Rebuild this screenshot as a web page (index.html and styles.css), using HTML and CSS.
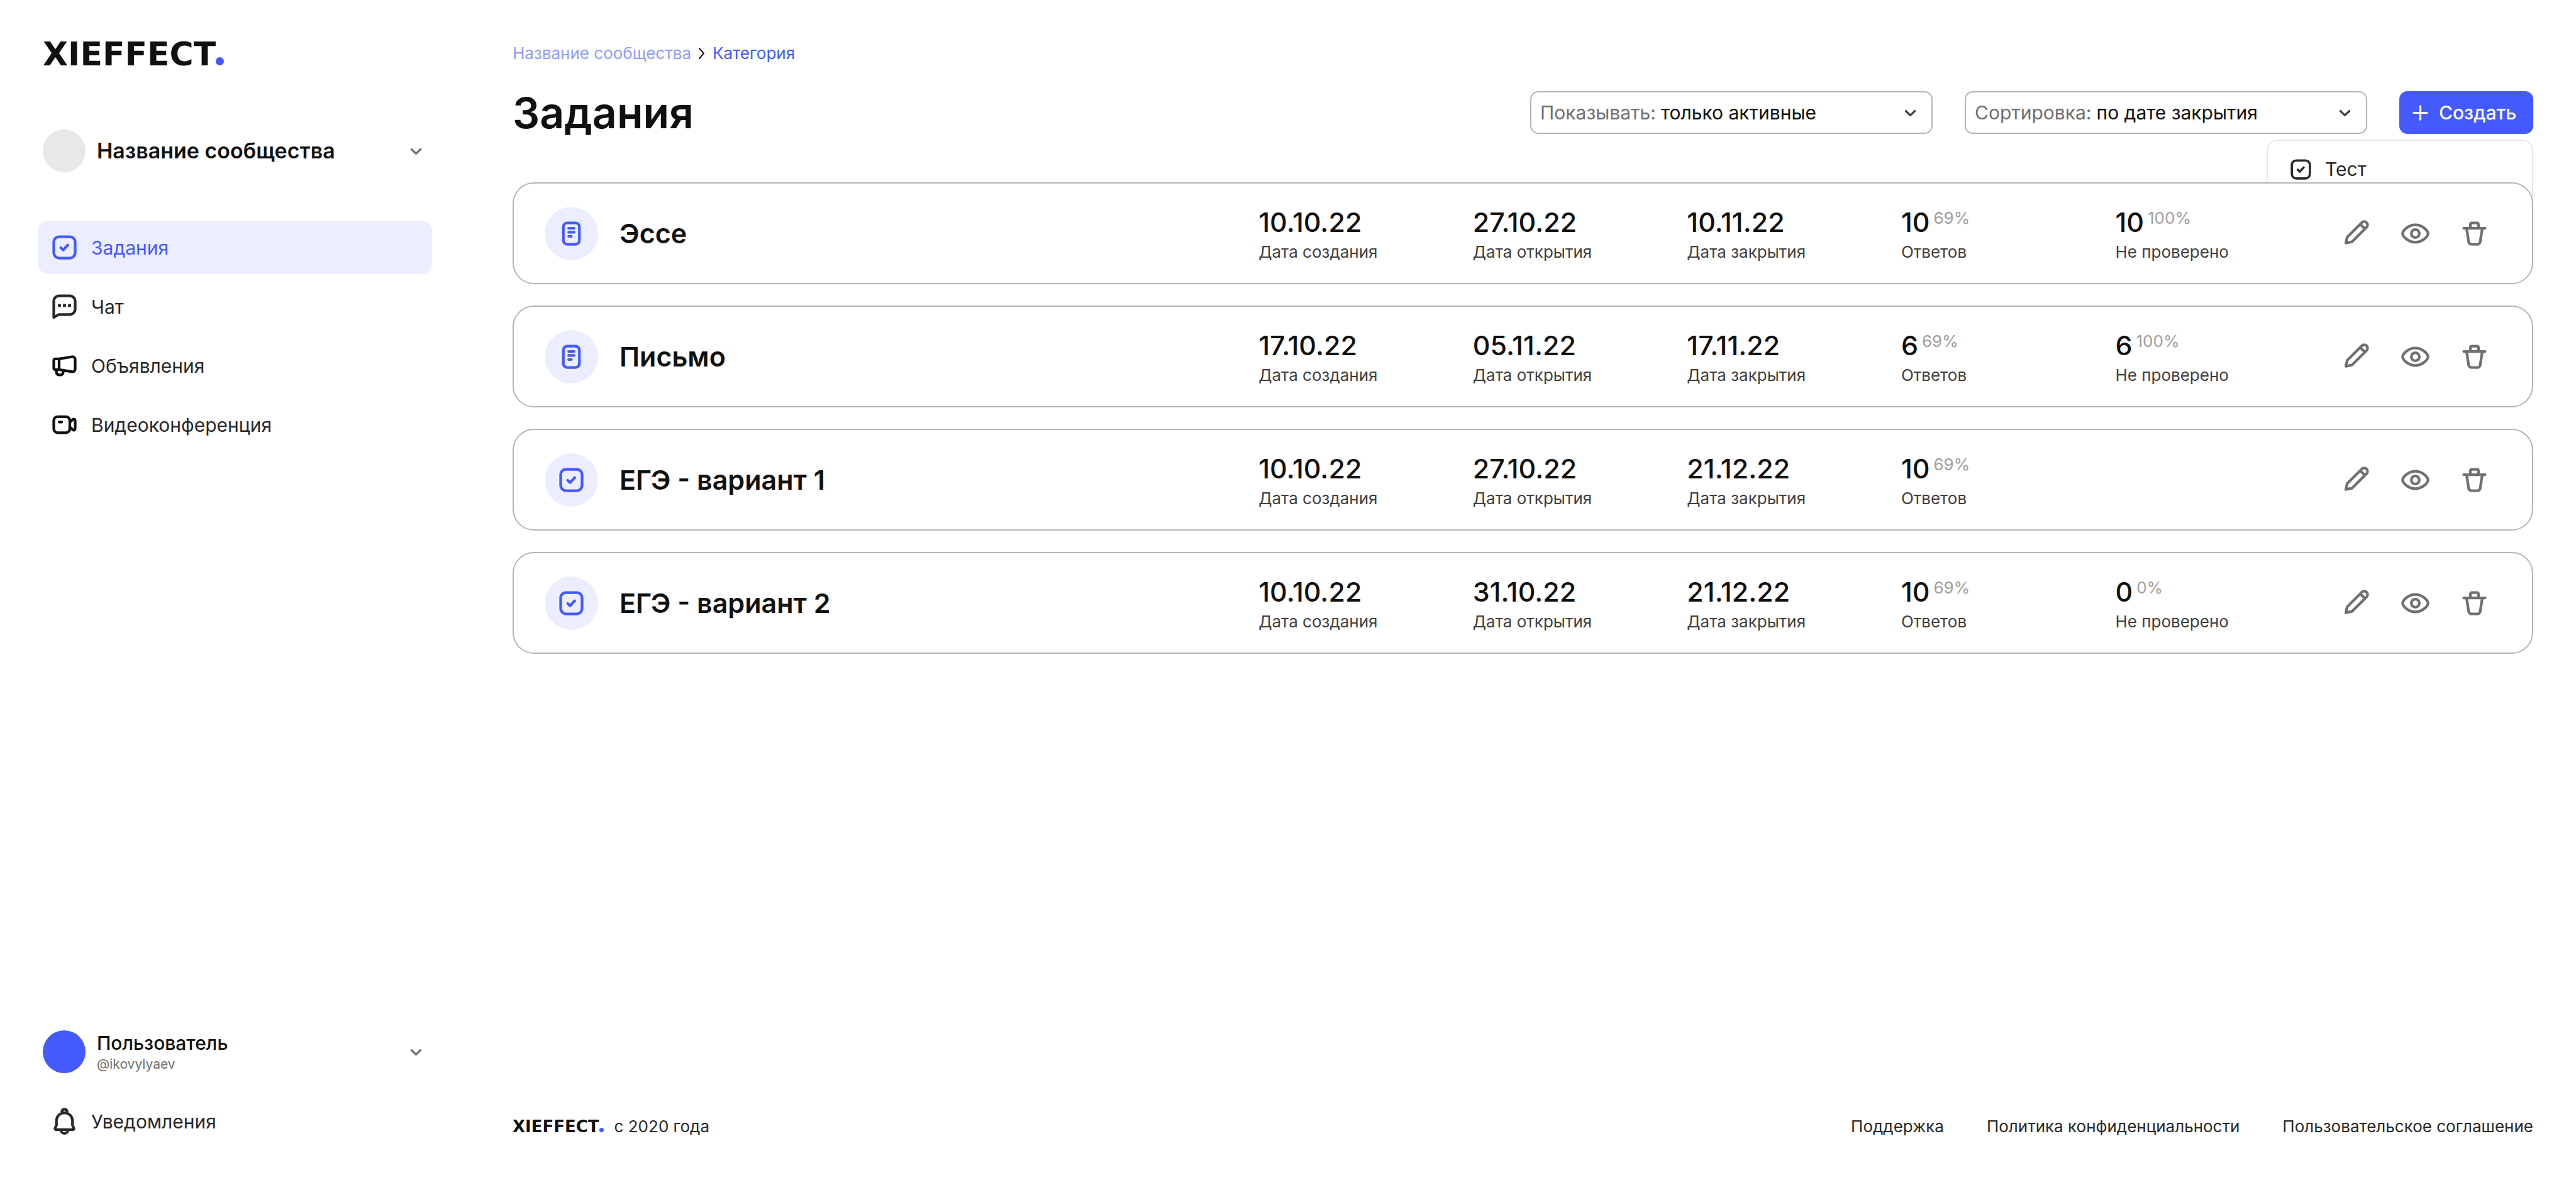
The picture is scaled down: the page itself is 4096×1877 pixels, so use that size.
FILE: index.html
```html
<!DOCTYPE html>
<html lang="ru">
<head>
<meta charset="utf-8">
<title>Задания</title>
<link rel="stylesheet" href="styles.css">
</head>
<body>
<svg class="sprite" aria-hidden="true">
  <symbol id="i-task" viewBox="0 0 24 24"><rect x="4" y="4" width="16" height="16" rx="4"/><path d="M9.25 12.25L11 14l3.5-3.75"/></symbol>
  <symbol id="i-chat" viewBox="0 0 24 24"><path d="M4 20.2V8a4 4 0 0 1 4-4h8a4 4 0 0 1 4 4v6a4 4 0 0 1-4 4H7.8z"/><g fill="currentColor" stroke="none"><circle cx="8.25" cy="11.25" r="1.25"/><circle cx="12" cy="11.25" r="1.25"/><circle cx="15.75" cy="11.25" r="1.25"/></g></symbol>
  <symbol id="i-announce" viewBox="0 0 24 24"><path d="M8 7H5a1 1 0 0 0-1 1v6a1 1 0 0 0 1 1h3M8 7l9.7-1.6a2 2 0 0 1 2.3 2v7.2a2 2 0 0 1-2.3 2L8 15zM6 15v2a2 2 0 0 0 2 2h1a2 2 0 0 0 2-2v-1.3"/></symbol>
  <symbol id="i-video" viewBox="0 0 24 24"><rect x="4" y="6" width="12" height="12" rx="3"/><path d="M8 10h2M16 10.2l2.4-2.1a1 1 0 0 1 1.6.8v6.2a1 1 0 0 1-1.6.8L16 13.8"/></symbol>
  <symbol id="i-bell" viewBox="0 0 24 24"><path d="M6 11.7a6 6 0 0 1 12 0V15l1 2.2a.8.8 0 0 1-.8 1.1H5.8a.8.8 0 0 1-.8-1.1L6 15zM10 6V5a2 2 0 0 1 4 0v1M9.2 18.3a2.8 2.8 0 0 0 5.6 0"/></symbol>
  <symbol id="i-file" viewBox="0 0 24 24"><rect x="6" y="4" width="12" height="16" rx="3"/><path d="M10 8h4M10 11h4M10 14h2"/></symbol>
  <symbol id="i-pencil" viewBox="0 0 24 24"><path d="M4.25 19.1l1-4.4L16.23 3.73a2.5 2.5 0 0 1 3.54 3.54L8.8 18.2zM15 5l3.5 3.5"/></symbol>
  <symbol id="i-eye" viewBox="0 0 24 24"><path d="M2.5 12c0-2 4-6.5 9.5-6.5s9.5 4.5 9.5 6.5-4 6.5-9.5 6.5S2.5 14 2.5 12z"/><circle cx="12" cy="12" r="3"/></symbol>
  <symbol id="i-trash" viewBox="0 0 24 24"><path d="M4 8h16M9 8V5a1 1 0 0 1 1-1h4a1 1 0 0 1 1 1v3M6.2 8.5l1.5 9.8A2 2 0 0 0 9.7 20h4.6a2 2 0 0 0 2-1.7l1.5-9.8"/></symbol>
  <symbol id="i-down" viewBox="0 0 24 24"><path stroke-width="1.5" d="M8.6 10.6L12 13.8l3.4-3.2"/></symbol>
  <symbol id="i-plus" viewBox="0 0 24 24"><path stroke-width="1.5" d="M12 7v10M7 12h10"/></symbol>
</svg>

<div class="layout">
  <aside class="sidebar">
    <a class="logo" href="#">XIEFFECT<span class="logo-dot"></span></a>

    <button class="switcher community" type="button">
      <span class="avatar"></span>
      <span class="switcher-title">Название сообщества</span>
      <svg class="icon"><use href="#i-down"/></svg>
    </button>

    <nav class="nav">
      <a class="nav-item active" href="#"><svg class="icon"><use href="#i-task"/></svg>Задания</a>
      <a class="nav-item" href="#"><svg class="icon"><use href="#i-chat"/></svg>Чат</a>
      <a class="nav-item" href="#"><svg class="icon dark"><use href="#i-announce"/></svg>Объявления</a>
      <a class="nav-item" href="#"><svg class="icon dark"><use href="#i-video"/></svg>Видеоконференция</a>
    </nav>

    <div class="sidebar-bottom">
      <button class="switcher" type="button">
        <span class="avatar user"></span>
        <span class="user-text"><span class="user-name">Пользователь</span><span class="user-handle">@ikovylyaev</span></span>
        <svg class="icon"><use href="#i-down"/></svg>
      </button>
      <a class="nav-item" href="#"><svg class="icon"><use href="#i-bell"/></svg>Уведомления</a>
    </div>
  </aside>

  <main class="main">
    <nav class="crumbs">
      <a class="crumb-parent" href="#">Название сообщества</a>
      <svg class="crumb-sep" viewBox="0 0 10 18"><path d="M1 1l7 8-7 8"/></svg>
      <a href="#">Категория</a>
    </nav>

    <header class="toolbar">
      <h1>Задания</h1>
      <div class="controls">
        <div class="select">
          <label for="show">Показывать:</label>
          <select id="show"><option>только активные</option></select>
          <svg class="icon"><use href="#i-down"/></svg>
        </div>
        <div class="select">
          <label for="sort">Сортировка:</label>
          <select id="sort"><option>по дате закрытия</option></select>
          <svg class="icon"><use href="#i-down"/></svg>
        </div>
        <div class="create">
          <button class="create-button" type="button"><svg class="icon"><use href="#i-plus"/></svg>Создать</button>
          <div class="menu">
            <a class="menu-item" href="#"><svg class="icon"><use href="#i-task"/></svg>Тест</a>
          </div>
        </div>
      </div>
    </header>

    <ul class="cards">
      <li class="card">
        <div class="name"><span class="badge"><svg class="icon"><use href="#i-file"/></svg></span><h2>Эссе</h2></div>
        <div class="stat"><span class="value">10.10.22</span><span class="caption">Дата создания</span></div>
        <div class="stat"><span class="value">27.10.22</span><span class="caption">Дата открытия</span></div>
        <div class="stat"><span class="value">10.11.22</span><span class="caption">Дата закрытия</span></div>
        <div class="stat"><span class="value">10<span class="percent">69%</span></span><span class="caption">Ответов</span></div>
        <div class="stat"><span class="value">10<span class="percent">100%</span></span><span class="caption">Не проверено</span></div>
        <div class="actions">
          <button type="button" aria-label="Редактировать"><svg class="icon"><use href="#i-pencil"/></svg></button>
          <button type="button" aria-label="Просмотр"><svg class="icon"><use href="#i-eye"/></svg></button>
          <button type="button" aria-label="Удалить"><svg class="icon"><use href="#i-trash"/></svg></button>
        </div>
      </li>
      <li class="card">
        <div class="name"><span class="badge"><svg class="icon"><use href="#i-file"/></svg></span><h2>Письмо</h2></div>
        <div class="stat"><span class="value">17.10.22</span><span class="caption">Дата создания</span></div>
        <div class="stat"><span class="value">05.11.22</span><span class="caption">Дата открытия</span></div>
        <div class="stat"><span class="value">17.11.22</span><span class="caption">Дата закрытия</span></div>
        <div class="stat"><span class="value">6<span class="percent">69%</span></span><span class="caption">Ответов</span></div>
        <div class="stat"><span class="value">6<span class="percent">100%</span></span><span class="caption">Не проверено</span></div>
        <div class="actions">
          <button type="button" aria-label="Редактировать"><svg class="icon"><use href="#i-pencil"/></svg></button>
          <button type="button" aria-label="Просмотр"><svg class="icon"><use href="#i-eye"/></svg></button>
          <button type="button" aria-label="Удалить"><svg class="icon"><use href="#i-trash"/></svg></button>
        </div>
      </li>
      <li class="card">
        <div class="name"><span class="badge"><svg class="icon"><use href="#i-task"/></svg></span><h2>ЕГЭ - вариант 1</h2></div>
        <div class="stat"><span class="value">10.10.22</span><span class="caption">Дата создания</span></div>
        <div class="stat"><span class="value">27.10.22</span><span class="caption">Дата открытия</span></div>
        <div class="stat"><span class="value">21.12.22</span><span class="caption">Дата закрытия</span></div>
        <div class="stat"><span class="value">10<span class="percent">69%</span></span><span class="caption">Ответов</span></div>
        <div class="stat"></div>
        <div class="actions">
          <button type="button" aria-label="Редактировать"><svg class="icon"><use href="#i-pencil"/></svg></button>
          <button type="button" aria-label="Просмотр"><svg class="icon"><use href="#i-eye"/></svg></button>
          <button type="button" aria-label="Удалить"><svg class="icon"><use href="#i-trash"/></svg></button>
        </div>
      </li>
      <li class="card">
        <div class="name"><span class="badge"><svg class="icon"><use href="#i-task"/></svg></span><h2>ЕГЭ - вариант 2</h2></div>
        <div class="stat"><span class="value">10.10.22</span><span class="caption">Дата создания</span></div>
        <div class="stat"><span class="value">31.10.22</span><span class="caption">Дата открытия</span></div>
        <div class="stat"><span class="value">21.12.22</span><span class="caption">Дата закрытия</span></div>
        <div class="stat"><span class="value">10<span class="percent">69%</span></span><span class="caption">Ответов</span></div>
        <div class="stat"><span class="value">0<span class="percent">0%</span></span><span class="caption">Не проверено</span></div>
        <div class="actions">
          <button type="button" aria-label="Редактировать"><svg class="icon"><use href="#i-pencil"/></svg></button>
          <button type="button" aria-label="Просмотр"><svg class="icon"><use href="#i-eye"/></svg></button>
          <button type="button" aria-label="Удалить"><svg class="icon"><use href="#i-trash"/></svg></button>
        </div>
      </li>
    </ul>

    <footer class="footer">
      <a class="logo small" href="#">XIEFFECT<span class="logo-dot"></span></a>
      <span>с 2020 года</span>
      <div class="footer-links">
        <a href="#">Поддержка</a>
        <a href="#">Политика конфиденциальности</a>
        <a href="#">Пользовательское соглашение</a>
      </div>
    </footer>
  </main>
</div>
</body>
</html>
```
FILE: styles.css
```css
:root {
  --accent: #445aff;
  --tint: #eceeff;
  --ink: #101010;
  --text: #282828;
  --muted: #707070;
  --line: #b5b5b5;
}

* { box-sizing: border-box; }

body {
  margin: 0;
  background: #fff;
  color: var(--text);
  font: 400 30px/36px Inter, "Noto Sans", sans-serif;
}

a { color: inherit; text-decoration: none; }

button, select {
  margin: 0;
  padding: 0;
  border: 0;
  background: none;
  color: inherit;
  font: inherit;
  text-align: left;
}

h1, h2, ul { margin: 0; padding: 0; }

.sprite { display: none; }

.icon {
  flex: none;
  width: 51px;
  height: 51px;
  fill: none;
  stroke: currentColor;
  stroke-width: 2;
  stroke-linecap: round;
  stroke-linejoin: round;
}

.icon.dark { color: var(--ink); }

.layout {
  display: grid;
  grid-template-columns: 747px 1fr;
  min-height: 100vh;
}

/* Sidebar */

.sidebar {
  display: flex;
  flex-direction: column;
  padding: 69px 60px 51px;
}

.logo {
  display: flex;
  align-items: baseline;
  margin-left: 8px;
  color: var(--ink);
  font: 700 52px/34px "DejaVu Sans", sans-serif;
}

.logo-dot {
  width: 13px;
  height: 13px;
  border-radius: 50%;
  background: var(--accent);
}

.logo.small {
  margin: 0;
  font-size: 26px;
  line-height: 32px;
}

.logo.small .logo-dot { width: 7px; height: 7px; }

.switcher {
  display: flex;
  align-items: center;
  gap: 18px;
  padding-left: 8px;
  color: var(--muted);
}

.switcher .icon { margin-left: auto; }

.community { margin-top: 102px; }

.avatar {
  flex: none;
  width: 68px;
  height: 68px;
  border-radius: 50%;
  background: #e8e8e8;
}

.avatar.user { background: var(--accent); }

.switcher-title {
  color: var(--ink);
  font-size: 34px;
  font-weight: 600;
}

.user-text { display: grid; gap: 3px; }

.user-name { color: var(--ink); font-weight: 500; }

.user-handle { font-size: 21px; line-height: 25px; }

.nav {
  display: grid;
  gap: 9px;
  margin-top: 77px;
}

.nav-item {
  display: flex;
  align-items: center;
  gap: 17px;
  height: 85px;
  padding: 0 17px;
  border-radius: 17px;
}

.nav-item.active { background: var(--tint); color: var(--accent); }

.sidebar-bottom {
  display: grid;
  gap: 34px;
  margin-top: auto;
}

/* Main column */

.main {
  display: flex;
  flex-direction: column;
  padding: 69px 68px 69px;
}

.crumbs {
  display: flex;
  align-items: center;
  gap: 12px;
  color: var(--accent);
  font-size: 26px;
  line-height: 32px;
}

.crumb-parent { color: #8f9cff; }

.crumb-sep {
  width: 10px;
  height: 18px;
  fill: none;
  stroke: var(--ink);
  stroke-width: 2;
  stroke-linecap: round;
}

.toolbar {
  display: flex;
  justify-content: space-between;
  align-items: center;
  margin-top: 44px;
}

h1 {
  color: var(--ink);
  font-size: 68px;
  font-weight: 600;
  line-height: 68px;
}

.controls { display: flex; gap: 51px; }

.select {
  display: flex;
  align-items: center;
  gap: 8px;
  width: 640px;
  height: 68px;
  padding: 0 8px 0 14px;
  border: 2px solid var(--line);
  border-radius: 13px;
  color: var(--muted);
}

.select select {
  flex: 1;
  appearance: none;
  color: var(--ink);
  outline: 0;
}

.select .icon { color: #404040; }

.create { position: relative; }

.create-button {
  display: flex;
  align-items: center;
  gap: 4px;
  width: 213px;
  height: 68px;
  padding-left: 8px;
  border-radius: 13px;
  background: var(--accent);
  color: #fff;
  font-weight: 500;
}

.menu {
  position: absolute;
  top: 77px;
  right: 0;
  width: 424px;
  min-height: 140px;
  padding: 17px 0;
  border: 2px solid #e8e8e8;
  border-radius: 17px;
  background: #fff;
}

.menu-item {
  display: flex;
  align-items: center;
  gap: 17px;
  height: 56px;
  padding: 0 31px;
}

.menu-item .icon { width: 43px; height: 43px; }

/* Task cards cover the lower part of the open menu */

.cards {
  position: relative;
  display: grid;
  gap: 34px;
  margin-top: 77px;
  list-style: none;
}

.card {
  display: grid;
  grid-template-columns: 40fr repeat(5, 12fr) auto;
  align-items: center;
  height: 162px;
  padding: 0 49px;
  border: 2px solid var(--line);
  border-radius: 34px;
  background: #fff;
}

.name { display: flex; align-items: center; gap: 34px; }

.badge {
  display: grid;
  place-items: center;
  width: 85px;
  height: 85px;
  border-radius: 50%;
  background: var(--tint);
  color: var(--accent);
}

h2 {
  color: var(--ink);
  font-size: 43px;
  font-weight: 600;
  line-height: 52px;
}

.stat { display: grid; gap: 6px; min-width: 0; }

.value {
  display: flex;
  gap: 6px;
  color: var(--ink);
  font-size: 43px;
  font-weight: 500;
  line-height: 52px;
}

.percent {
  padding-top: 4px;
  color: #9e9e9e;
  font-size: 26px;
  font-weight: 400;
  line-height: 31px;
}

.caption { color: #404040; font-size: 26px; line-height: 31px; }

.actions { display: flex; gap: 9px; color: var(--muted); }

.actions button {
  display: grid;
  place-items: center;
  width: 85px;
  height: 85px;
}

.footer {
  display: flex;
  align-items: center;
  gap: 17px;
  margin-top: auto;
  font-size: 26px;
  line-height: 32px;
}

.footer-links { display: flex; gap: 68px; margin-left: auto; }
```
